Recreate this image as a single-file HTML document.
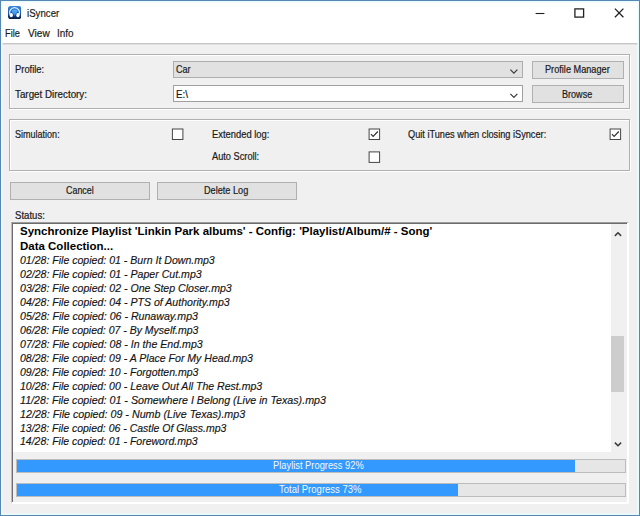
<!DOCTYPE html>
<html><head><meta charset="utf-8"><title>iSyncer</title>
<style>
html,body{margin:0;padding:0;}
body{width:640px;height:516px;position:relative;overflow:hidden;background:#f0f0f0;font-family:"Liberation Sans",sans-serif;font-size:12px;color:#1a1a1a;}
.a{position:absolute;}
.t{position:absolute;white-space:nowrap;line-height:16px;height:16px;transform-origin:0 50%;}
.ui{color:#1a1a1a;-webkit-text-stroke:0.2px #1a1a1a;}
.pt{color:#f4f8ff;}
.log{font-style:italic;color:#141414;-webkit-text-stroke:0.15px #141414;}
.logb{font-weight:bold;color:#000;}
.gb{position:absolute;border:1px solid #b0b0b0;box-shadow:1px 1px 0 #fff, inset 1px 1px 0 #fff;box-sizing:border-box;}
.btn{position:absolute;box-sizing:border-box;background:#e1e1e1;border:1px solid #b0b0b0;}
.cb{position:absolute;box-sizing:border-box;width:12px;height:12px;border:1px solid #484848;background:#fff;}
</style></head><body>
<!-- title + menu background -->
<div class="a" id="titlebar" style="left:0;top:0;width:640px;height:43px;background:#fff;"></div>
<div class="a" id="menuline" style="left:0;top:43px;width:640px;height:1px;background:#c6c6c6;"></div>
<div class="a" id="menuline2" style="left:0;top:44px;width:640px;height:1px;background:#e0e0e0;"></div>
<!-- app icon -->
<svg class="a" id="appicon" style="left:8px;top:6px" width="13" height="13" viewBox="0 0 13 13">
<defs><linearGradient id="g" x1="0" y1="0" x2="0" y2="1"><stop offset="0" stop-color="#3587dc"/><stop offset="0.5" stop-color="#1c5db2"/><stop offset="1" stop-color="#051a40"/></linearGradient>
<linearGradient id="g2" x1="0" y1="0" x2="0" y2="1"><stop offset="0" stop-color="#55b0fa"/><stop offset="1" stop-color="#2b82de"/></linearGradient></defs>
<rect x="0" y="0" width="13.2" height="13.2" rx="2.6" fill="url(#g)"/>
<path d="M6.6 10 L3.3 4.7 Q6.6 2.2 10 4.7 Z" fill="url(#g2)"/>
<path d="M2 8.7 A5 5 0 1 1 11.1 8.7" fill="none" stroke="#dcedff" stroke-width="1.25"/>
<ellipse cx="3.3" cy="9.2" rx="1.6" ry="2.1" fill="#fff"/>
<ellipse cx="9.9" cy="9.2" rx="1.6" ry="2.1" fill="#fff"/>
</svg>
<!-- window buttons -->
<svg class="a" id="winbtns" style="left:530px;top:4px" width="100" height="20" viewBox="0 0 100 20">
<path d="M5.6 9.5 H14.4" stroke="#222" stroke-width="1.1" fill="none"/>
<rect x="44.9" y="4.9" width="8.7" height="8.2" stroke="#222" stroke-width="1.3" fill="none"/>
<path d="M84.9 4.6 L93.4 13.2 M93.4 4.6 L84.9 13.2" stroke="#222" stroke-width="1.3" fill="none"/>
</svg>

<!-- group 1 -->
<div class="gb" id="g1" style="left:9px;top:54px;width:621px;height:55px;"></div>
<div class="a" id="c1" style="left:173px;top:61px;width:350px;height:17px;box-sizing:border-box;background:#e1e1e1;border:1px solid #adadad;"></div>
<div class="a" id="c2" style="left:173px;top:85px;width:350px;height:17px;box-sizing:border-box;background:#fff;border:1px solid #a0a0a0;"></div>
<svg class="a" id="ar1" style="left:508px;top:67px" width="12" height="8" viewBox="0 0 12 8"><path d="M2.4 2.6 L5.9 6.1 L9.4 2.6" fill="none" stroke="#3c3c3c" stroke-width="1.25"/></svg>
<svg class="a" id="ar2" style="left:508px;top:91px" width="12" height="8" viewBox="0 0 12 8"><path d="M2.4 2.9 L5.9 6.4 L9.4 2.9" fill="none" stroke="#3c3c3c" stroke-width="1.25"/></svg>
<div class="btn" id="b1" style="left:532px;top:61px;width:92px;height:18px;"></div>
<div class="btn" id="b2" style="left:532px;top:85px;width:92px;height:18px;"></div>

<!-- group 2 -->
<div class="gb" id="g2" style="left:9px;top:119px;width:621px;height:52px;"></div>
<svg class="a" id="k1" style="left:170px;top:127px" width="14" height="14" viewBox="0 0 14 14"><rect x="2.40" y="2.00" width="10.50" height="10.50" fill="#fff" stroke="#454545" stroke-width="1"/></svg>
<svg class="a" id="k2" style="left:367px;top:127px" width="14" height="14" viewBox="0 0 14 14"><rect x="2.10" y="2.00" width="10.50" height="10.50" fill="#fff" stroke="#454545" stroke-width="1"/><path d="M3.90 7.20 L6.10 9.40 L10.80 4.50" fill="none" stroke="#2c2c2c" stroke-width="1.1"/></svg>
<svg class="a" id="k3" style="left:367px;top:150px" width="14" height="14" viewBox="0 0 14 14"><rect x="2.10" y="1.90" width="10.50" height="10.50" fill="#fff" stroke="#454545" stroke-width="1"/></svg>
<svg class="a" id="k4" style="left:608px;top:127px" width="14" height="14" viewBox="0 0 14 14"><rect x="2.10" y="2.00" width="10.50" height="10.50" fill="#fff" stroke="#454545" stroke-width="1"/><path d="M3.90 7.20 L6.10 9.40 L10.80 4.50" fill="none" stroke="#2c2c2c" stroke-width="1.1"/></svg>

<!-- buttons -->
<div class="btn" id="b3" style="left:10px;top:182px;width:140px;height:18px;"></div>
<div class="btn" id="b4" style="left:157px;top:182px;width:140px;height:18px;"></div>

<!-- sunken panel -->
<div class="a" id="panel" style="left:11px;top:222px;width:618px;height:282px;box-sizing:border-box;border-top:1px solid #9c9c9c;border-left:1px solid #bdbdbd;border-right:2px solid #fff;border-bottom:2px solid #fff;"></div>
<div class="a" id="panel2" style="left:12px;top:223px;width:615px;height:279px;box-sizing:border-box;border-top:1px solid #6c6c6c;border-left:1px solid #6c6c6c;"></div>
<div class="a" id="logbg" style="left:13px;top:224px;width:598px;height:228px;background:#fff;"></div>
<div class="a" id="sb" style="left:611px;top:224px;width:16px;height:228px;background:#f0f0f0;"></div>
<div class="a" id="thumb" style="left:611px;top:336px;width:13.2px;height:55.6px;background:#cdcdcd;"></div>
<svg class="a" id="sup" style="left:613px;top:230px" width="10" height="8" viewBox="0 0 10 8"><path d="M1.9 5.9 L5 2.8 L8.1 5.9" fill="none" stroke="#3a3a3a" stroke-width="1.5"/></svg>
<svg class="a" id="sdn" style="left:613px;top:440px" width="10" height="8" viewBox="0 0 10 8"><path d="M1.9 2.6 L5 5.7 L8.1 2.6" fill="none" stroke="#3a3a3a" stroke-width="1.5"/></svg>

<!-- progress bars -->
<div class="a" id="p1" style="left:16px;top:459px;width:610px;height:14px;box-sizing:border-box;background:#e6e6e6;border:1px solid #bcbcbc;"></div>
<div class="a" id="p1f" style="left:16.6px;top:459.8px;width:558px;height:12.5px;background:#3399ff;"></div>
<div class="a" id="p2" style="left:16px;top:483px;width:610px;height:14px;box-sizing:border-box;background:#e6e6e6;border:1px solid #bcbcbc;"></div>
<div class="a" id="p2f" style="left:16.6px;top:483.6px;width:441.4px;height:12.3px;background:#3399ff;"></div>

<span class="t ui" id="title" style="left:26.50px;top:5.00px;font-size:11.00px;transform:scaleX(0.8790);">iSyncer</span>
<span class="t ui" id="m1" style="left:4.90px;top:25.00px;font-size:11.00px;transform:scaleX(0.8374);">File</span>
<span class="t ui" id="m2" style="left:28.00px;top:25.00px;font-size:11.00px;transform:scaleX(0.9194);">View</span>
<span class="t ui" id="m3" style="left:57.20px;top:25.00px;font-size:11.00px;transform:scaleX(0.9014);">Info</span>
<span class="t ui" id="l1" style="left:15.20px;top:62.00px;font-size:10.10px;transform:scaleX(0.9293);">Profile:</span>
<span class="t ui" id="l2" style="left:15.00px;top:87.00px;font-size:10.10px;transform:scaleX(0.9724);">Target Directory:</span>
<span class="t ui" id="c1t" style="left:175.90px;top:62.00px;font-size:10.10px;transform:scaleX(0.8976);">Car</span>
<span class="t ui" id="c2t" style="left:176.00px;top:87.00px;font-size:10.10px;transform:scaleX(0.9722);">E:\</span>
<span class="t ui" id="l3" style="left:15.25px;top:127.00px;font-size:10.10px;transform:scaleX(0.8941);">Simulation:</span>
<span class="t ui" id="l4" style="left:211.90px;top:127.00px;font-size:10.10px;transform:scaleX(0.9298);">Extended log:</span>
<span class="t ui" id="l5" style="left:211.90px;top:149.00px;font-size:10.10px;transform:scaleX(0.9143);">Auto Scroll:</span>
<span class="t ui" id="l6" style="left:407.60px;top:127.00px;font-size:10.10px;transform:scaleX(0.9112);">Quit iTunes when closing iSyncer:</span>
<span class="t ui" id="l7" style="left:15.20px;top:208.00px;font-size:10.10px;transform:scaleX(0.9516);">Status:</span>
<span class="t ui" id="b1t" style="left:544.80px;top:62.00px;font-size:10.10px;transform:scaleX(0.9079);">Profile Manager</span>
<span class="t ui" id="b2t" style="left:562.00px;top:87.00px;font-size:10.10px;transform:scaleX(0.8969);">Browse</span>
<span class="t ui" id="b3t" style="left:65.80px;top:183.00px;font-size:10.10px;transform:scaleX(0.8816);">Cancel</span>
<span class="t ui" id="b4t" style="left:204.00px;top:183.00px;font-size:10.10px;transform:scaleX(0.9062);">Delete Log</span>
<span class="t pt" id="p1t" style="left:273.30px;top:458.00px;font-size:10.10px;transform:scaleX(0.9237);">Playlist Progress 92%</span>
<span class="t pt" id="p2t" style="left:278.50px;top:482.00px;font-size:10.10px;transform:scaleX(0.9437);">Total Progress 73%</span>
<span class="t logb" id="lb1" style="left:19.80px;top:223.00px;font-size:11.40px;transform:scaleX(1.0079);">Synchronize Playlist 'Linkin Park albums' - Config: 'Playlist/Album/# - Song'</span>
<span class="t logb" id="lb2" style="left:19.80px;top:238.00px;font-size:11.40px;transform:scaleX(1.0079);">Data Collection...</span>
<span class="t log" id="r1" style="left:20.30px;top:252.00px;font-size:10.67px;transform:scaleX(0.9901);">01/28: File copied: 01 - Burn It Down.mp3</span>
<span class="t log" id="r2" style="left:20.30px;top:266.00px;font-size:10.67px;transform:scaleX(0.9926);">02/28: File copied: 01 - Paper Cut.mp3</span>
<span class="t log" id="r3" style="left:20.30px;top:280.00px;font-size:10.67px;transform:scaleX(0.9919);">03/28: File copied: 02 - One Step Closer.mp3</span>
<span class="t log" id="r4" style="left:20.30px;top:294.00px;font-size:10.67px;transform:scaleX(0.9916);">04/28: File copied: 04 - PTS of Authority.mp3</span>
<span class="t log" id="r5" style="left:20.30px;top:308.00px;font-size:10.67px;transform:scaleX(0.9958);">05/28: File copied: 06 - Runaway.mp3</span>
<span class="t log" id="r6" style="left:20.30px;top:322.00px;font-size:10.67px;transform:scaleX(0.9846);">06/28: File copied: 07 - By Myself.mp3</span>
<span class="t log" id="r7" style="left:20.30px;top:336.00px;font-size:10.67px;transform:scaleX(0.9949);">07/28: File copied: 08 - In the End.mp3</span>
<span class="t log" id="r8" style="left:20.30px;top:350.00px;font-size:10.67px;transform:scaleX(0.9890);">08/28: File copied: 09 - A Place For My Head.mp3</span>
<span class="t log" id="r9" style="left:20.30px;top:364.00px;font-size:10.67px;transform:scaleX(0.9877);">09/28: File copied: 10 - Forgotten.mp3</span>
<span class="t log" id="r10" style="left:20.30px;top:378.00px;font-size:10.67px;transform:scaleX(0.9893);">10/28: File copied: 00 - Leave Out All The Rest.mp3</span>
<span class="t log" id="r11" style="left:20.30px;top:392.00px;font-size:10.67px;transform:scaleX(1.0029);">11/28: File copied: 01 - Somewhere I Belong (Live in Texas).mp3</span>
<span class="t log" id="r12" style="left:20.30px;top:406.00px;font-size:10.67px;transform:scaleX(1.0049);">12/28: File copied: 09 - Numb (Live Texas).mp3</span>
<span class="t log" id="r13" style="left:20.30px;top:420.00px;font-size:10.67px;transform:scaleX(0.9846);">13/28: File copied: 06 - Castle Of Glass.mp3</span>
<span class="t log" id="r14" style="left:20.30px;top:433.00px;font-size:10.67px;transform:scaleX(0.9868);">14/28: File copied: 01 - Foreword.mp3</span>

<!-- window border -->
<div class="a" id="wb" style="left:0;top:0;width:640px;height:516px;box-sizing:border-box;border:1px solid #5888b2;box-shadow:inset 0 0 0 1px #e6fbff, inset 0 0 0 2px rgba(240,250,255,0.6);"></div>
</body></html>
